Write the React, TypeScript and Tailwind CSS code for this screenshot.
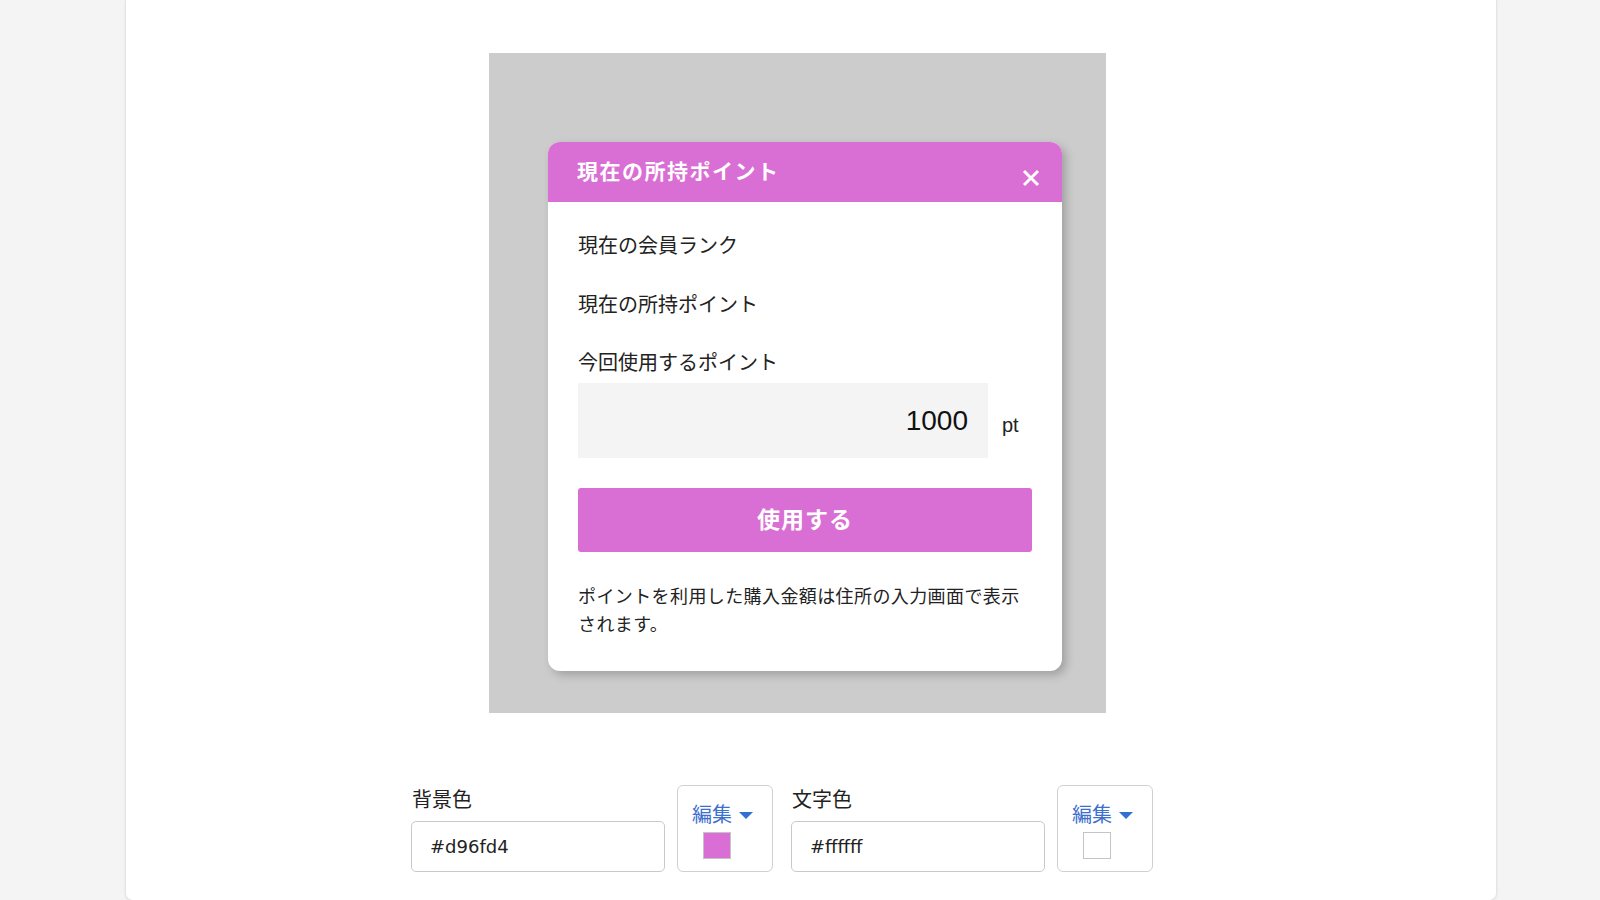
import React from 'react'

const PINK = '#d96fd4'

function CloseIcon() {
  return (
    <svg width="18" height="18" viewBox="0 0 18 18" fill="none">
      <path d="M2 2L16 16M16 2L2 16" stroke="white" strokeWidth="3" strokeLinecap="butt" />
    </svg>
  )
}

function Caret() {
  return (
    <svg width="14" height="7" viewBox="0 0 14 7">
      <path d="M0 0H14L7 7Z" fill="#2f6fd6" />
    </svg>
  )
}

function ColorField({ label, value, swatch }: { label: string; value: string; swatch: string }) {
  return (
    <div className="flex items-end gap-[12px]">
      <div className="flex flex-col">
        <label className="text-[20px] leading-[24px] text-[#222] mb-[9px] pl-[1px]">{label}</label>
        <input
          type="text"
          readOnly
          value={value}
          className="w-[254px] h-[51px] rounded-[5px] border border-[#c9c9c9] bg-white pl-[18px] font-['DejaVu_Sans',sans-serif] text-[18px] text-[#222] outline-none"
        />
      </div>
      <button className="w-[96px] h-[87px] rounded-[6px] border border-[#d0d0d0] bg-white flex flex-col items-start pt-[17px] pl-[14px]">
        <span className="flex items-center gap-[7px]">
          <span className="text-[20px] leading-[24px] text-[#3d6fcf]">編集</span>
          <Caret />
        </span>
        <span
          className="mt-[5px] ml-[11px] w-[28px] h-[27px] border border-[#c4c4c4]"
          style={{ backgroundColor: swatch }}
        />
      </button>
    </div>
  )
}

export default function App() {
  return (
    <div className="min-h-[900px] bg-[#f4f4f4] font-['Liberation_Sans','Noto_Sans_CJK_JP',sans-serif] text-[#222]">
      <div className="ml-[125px] w-[1372px] bg-white border-x border-b border-[#e4e4e4] rounded-b-[8px] shadow-[0_1px_3px_rgba(0,0,0,0.06)] pt-[53px] pb-[28px]">
        {/* preview */}
        <div className="ml-[363px] w-[617px] h-[660px] bg-[#cccccc] pt-[89px] pl-[59px]">
          <div className="w-[514px] bg-white rounded-[12px] shadow-[4px_4px_10px_rgba(0,0,0,0.22)]">
            <div
              className="h-[60px] rounded-t-[12px] flex items-center justify-between pl-[29px] pr-[22px]"
              style={{ backgroundColor: PINK }}
            >
              <h2 className="text-[21px] font-bold text-white tracking-[1.5px]">現在の所持ポイント</h2>
              <span className="mt-[12px]">
                <CloseIcon />
              </span>
            </div>
            <div className="px-[30px] pt-[30px] pb-[32px]">
              <p className="text-[20px] leading-[28px]">現在の会員ランク</p>
              <p className="text-[20px] leading-[28px] mt-[31px]">現在の所持ポイント</p>
              <p className="text-[20px] leading-[28px] mt-[30px]">今回使用するポイント</p>
              <div className="mt-[6px] flex items-center gap-[14px]">
                <input
                  type="text"
                  readOnly
                  value="1000"
                  className="w-[410px] h-[75px] bg-[#f4f4f4] text-right pr-[20px] text-[28px] text-[#111] outline-none"
                />
                <span className="text-[20px] mt-[8px]">pt</span>
              </div>
              <button
                className="mt-[30px] w-full h-[64px] rounded-[3px] text-white text-[23px] font-bold tracking-[1px]"
                style={{ backgroundColor: PINK }}
              >
                使用する
              </button>
              <p className="mt-[31px] text-[18px] leading-[28px] tracking-[0.4px] text-[#222]">
                ポイントを利用した購入金額は住所の入力画面で表示されます。
              </p>
            </div>
          </div>
        </div>

        {/* colour controls */}
        <div className="mt-[72px] ml-[285px] flex items-end gap-[18px]">
          <ColorField label="背景色" value="#d96fd4" swatch={PINK} />
          <ColorField label="文字色" value="#ffffff" swatch="#ffffff" />
        </div>
      </div>
    </div>
  )
}
